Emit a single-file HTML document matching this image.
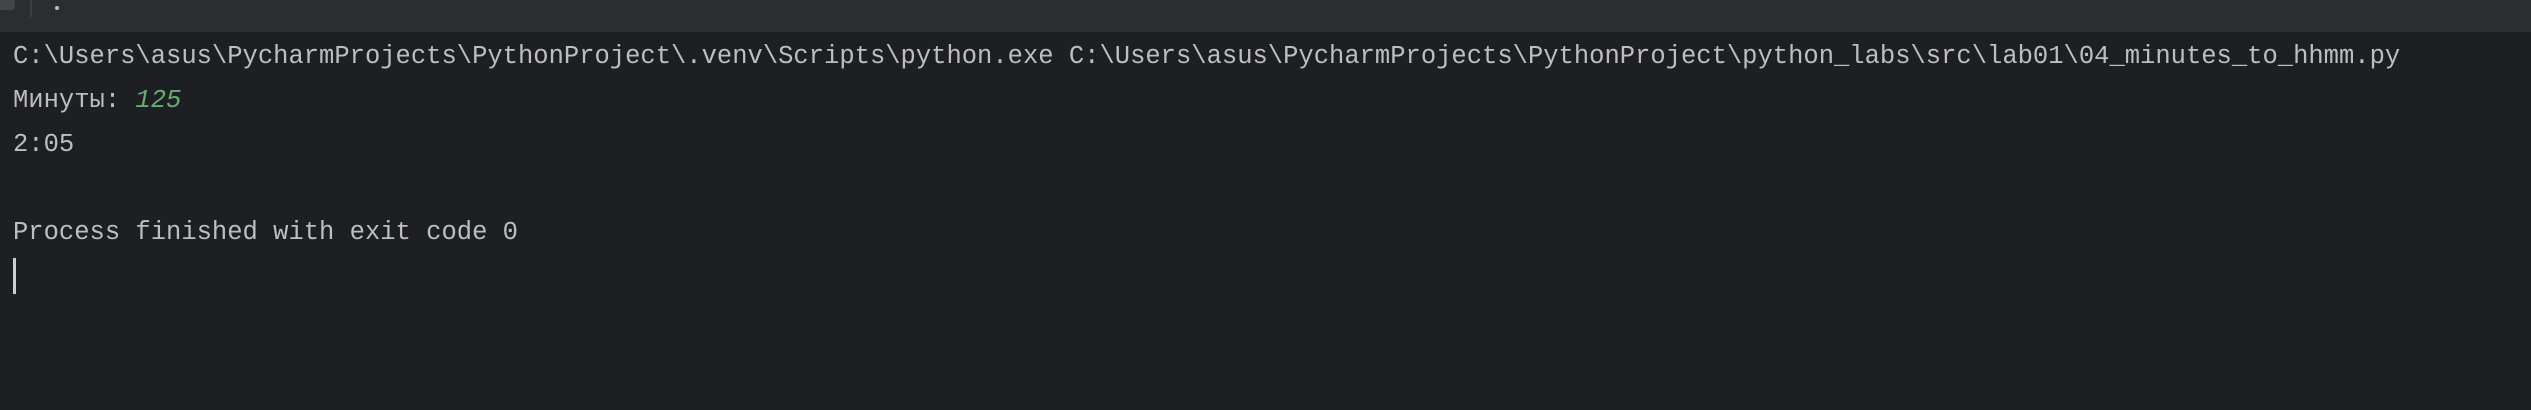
<!DOCTYPE html>
<html><head><style>
html,body{margin:0;padding:0;width:2531px;height:410px;overflow:hidden;background:#1e1f22;}
.top{position:absolute;left:0;top:0;width:2531px;height:32px;background:#2b2d30;}
.t{position:absolute;left:13px;font-family:"Liberation Mono",monospace;font-size:25.5px;color:#bcbec4;white-space:pre;line-height:30px;}
</style></head><body>
<div class="top">
<div style="position:absolute;left:0;top:0;width:15px;height:10px;background:#43454a;border-radius:0 0 4px 0"></div>
<div style="position:absolute;left:30px;top:0;width:2px;height:17px;background:#3c3e42"></div>
<div style="position:absolute;left:55px;top:6px;width:4px;height:4px;border-radius:2px;background:#bcbec4"></div>
</div>
<div class="t" style="top:42px">C:\Users\asus\PycharmProjects\PythonProject\.venv\Scripts\python.exe C:\Users\asus\PycharmProjects\PythonProject\python_labs\src\lab01\04_minutes_to_hhmm.py</div>
<div class="t" style="top:86px">Минуты: <i style="color:#6aab73">125</i></div>
<div class="t" style="top:130px">2:05</div>
<div class="t" style="top:218px">Process finished with exit code 0</div>
<div style="position:absolute;left:13px;top:258px;width:3px;height:36px;background:#ced0d6"></div>
</body></html>
